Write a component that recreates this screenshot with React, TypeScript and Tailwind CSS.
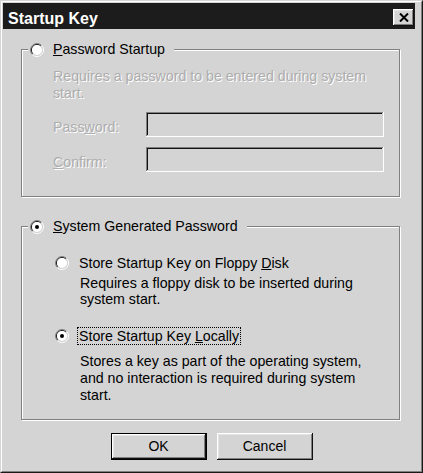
import React from "react";

const face = "#d4d4d4";

function Radio({ checked = false }: { checked?: boolean }) {
  return (
    <svg width="14" height="14" viewBox="0 0 14 14" className="shrink-0">
      <path d="M2.4 11.6A6.5 6.5 0 0 1 11.6 2.4" fill="none" stroke="#808080" />
      <path d="M11.6 2.4A6.5 6.5 0 0 1 2.4 11.6" fill="none" stroke="#ffffff" />
      <path d="M3.1 10.9A5.5 5.5 0 0 1 10.9 3.1" fill="none" stroke="#1a1a1a" />
      <path d="M10.9 3.1A5.5 5.5 0 0 1 3.1 10.9" fill="none" stroke={face} />
      <circle cx="7" cy="7" r="5" fill="#ffffff" />
      {checked && <circle cx="7" cy="7" r="2" fill="#000000" />}
    </svg>
  );
}

function Field({ label }: { label: React.ReactNode }) {
  return (
    <div className="flex items-center">
      <span className="mt-[5px] w-[93px] text-[#adadad] [text-shadow:1px_1px_0_#fff]">{label}</span>
      <div className="h-[25px] flex-1 bg-[#d4d4d4] shadow-[inset_-1px_-1px_0_#fff,inset_1px_1px_0_#808080,inset_-2px_-2px_0_#d4d4d4,inset_2px_2px_0_#111]" />
    </div>
  );
}

const etched = "border border-[#808080] shadow-[inset_1px_1px_0_#fff,1px_1px_0_#fff]";
const btn =
  "h-[27px] w-[96px] bg-[#d4d4d4] text-[14px] text-black shadow-[inset_-1px_-1px_0_#111,inset_1px_1px_0_#fff,inset_-2px_-2px_0_#808080,inset_2px_2px_0_#e4e4e4]";

export default function App() {
  return (
    <div className="h-[473px] w-[423px] border border-[#d4d4d4] border-r-[#1a1a1a] border-b-[#1a1a1a] bg-[#d4d4d4] font-['Liberation_Sans',Arial,sans-serif] text-[14.2px] leading-[17px] text-black">
      <div className="flex h-full flex-col border border-white border-r-[#808080] border-b-[#808080] p-px">
        {/* title bar */}
        <div className="mr-[5px] flex h-[26px] items-center justify-between bg-[#1c1c1c] pl-[5px] pr-px">
          <span className="mt-[4px] text-[16px] font-bold text-white">Startup Key</span>
          <button className="mb-[3px] flex h-[17px] w-[21px] items-center justify-center self-end bg-[#d4d4d4] shadow-[inset_-1px_-1px_0_#111,inset_1px_1px_0_#fff,inset_-2px_-2px_0_#808080,inset_2px_2px_0_#e4e4e4]">
            <svg width="10" height="9" viewBox="0 0 10 9">
              <path d="M1 0.5L9 8.5M9 0.5L1 8.5" stroke="#000" strokeWidth="2" />
            </svg>
          </button>
        </div>

        {/* password startup */}
        <fieldset className={`ml-[18px] mt-[12px] w-[379px] ${etched}`}>
          <legend className="ml-[6px] bg-[#d4d4d4] pl-[2px] pr-[9px]">
            <div className="flex items-center">
              <Radio />
              <span className="ml-[9px]">
                <u>P</u>assword Startup
              </span>
            </div>
          </legend>
          <div className="flex flex-col pb-[24px] pl-[31px] pr-[15px] pt-[10px]">
            <p className="text-[#adadad] [text-shadow:1px_1px_0_#fff]">
              Requires a password to be entered during system start.
            </p>
            <div className="mt-[10px] flex flex-col gap-[10px]">
              <Field
                label={
                  <>
                    Pass<u>w</u>ord:
                  </>
                }
              />
              <Field
                label={
                  <>
                    <u>C</u>onfirm:
                  </>
                }
              />
            </div>
          </div>
        </fieldset>

        {/* system generated */}
        <fieldset className={`ml-[18px] mt-[21px] w-[379px] ${etched}`}>
          <legend className="ml-[6px] bg-[#d4d4d4] pl-[2px] pr-[9px]">
            <div className="flex items-center">
              <Radio checked />
              <span className="ml-[9px]">
                <u>S</u>ystem Generated Password
              </span>
            </div>
          </legend>
          <div className="flex flex-col pb-[15px] pl-[33px] pr-[15px] pt-[19px]">
            <div className="flex items-center">
              <Radio />
              <span className="ml-[8px] border border-transparent px-px leading-[16px]">
                Store Startup Key on Floppy <u>D</u>isk
              </span>
            </div>
            <p className="ml-[25px] mt-[3px] leading-[16px]">
              Requires a floppy disk to be inserted during system start.
            </p>
            <div className="mt-[20px] flex items-center">
              <Radio checked />
              <span className="ml-[8px] border border-dotted border-black px-px leading-[16px]">
                Store Startup Key <u>L</u>ocally
              </span>
            </div>
            <p className="ml-[25px] mt-[8px]">
              Stores a key as part of the operating system, and no interaction is required during system start.
            </p>
          </div>
        </fieldset>

        <div className="mt-[13px] flex justify-center gap-[10px]">
          <button className={`${btn} border border-black`}>OK</button>
          <button className={btn}>Cancel</button>
        </div>
      </div>
    </div>
  );
}
